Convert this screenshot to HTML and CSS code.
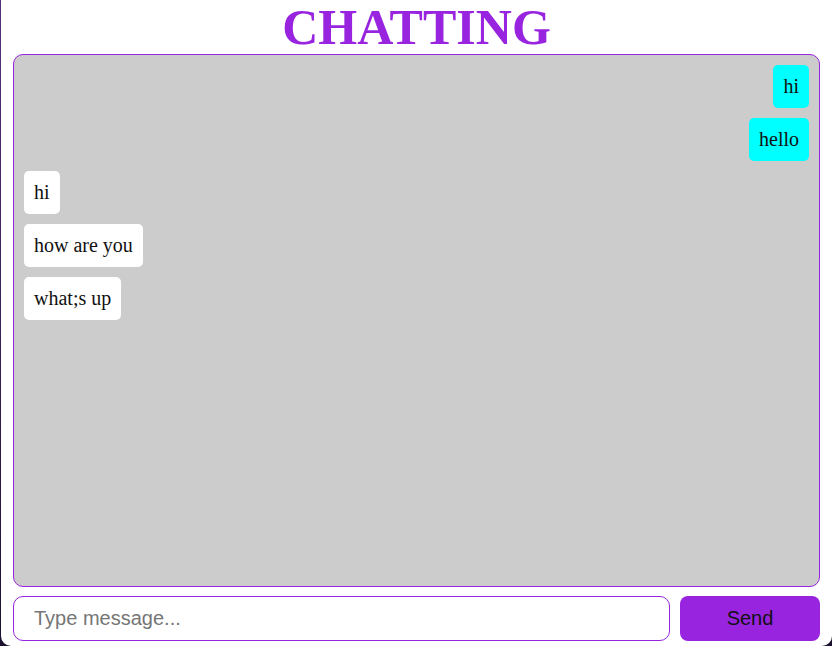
FILE: index.html
```html
<!DOCTYPE html>
<html>
<head>
<meta charset="utf-8">
<title>Chatting</title>
<link rel="stylesheet" href="styles.css">
</head>
<body>
<div class="app">
  <h1 class="title">CHATTING</h1>
  <div class="chat-box">
    <div class="msg sent">hi</div>
    <div class="msg sent">hello</div>
    <div class="msg received">hi</div>
    <div class="msg received">how are you</div>
    <div class="msg received">what;s up</div>
  </div>
  <div class="input-row">
    <input class="msg-input" type="text" placeholder="Type message...">
    <button class="send-btn">Send</button>
  </div>
</div>
</body>
</html>
```
FILE: styles.css
```css
html, body {
  margin: 0;
  padding: 0;
  height: 100%;
}
body {
  background: linear-gradient(to bottom, #55307a, #1c1230);
  font-family: "Liberation Serif", "Times New Roman", serif;
}
.app {
  box-sizing: border-box;
  margin-left: 1px;
  height: 646px;
  background: #fff;
  border-radius: 0 0 10px 10px;
  padding: 0 12px 5px 12px;
  display: flex;
  flex-direction: column;
}
.title {
  margin: 0;
  text-align: center;
  font-family: "Liberation Serif", "Times New Roman", serif;
  font-weight: bold;
  font-size: 50px;
  line-height: 54px;
  color: #9824e0;
}
.chat-box {
  flex: 1;
  background: #cccccc;
  border: 1px solid #9824e0;
  border-radius: 10px;
  padding: 10px;
  display: flex;
  flex-direction: column;
  align-items: flex-start;
  gap: 10px;
  overflow: auto;
}
.msg {
  font-size: 20px;
  line-height: 23px;
  padding: 10px;
  border-radius: 5px;
  color: #111;
}
.sent {
  align-self: flex-end;
  background: #00ffff;
}
.received {
  background: #ffffff;
}
.input-row {
  display: flex;
  gap: 10px;
  margin-top: 9px;
  height: 45px;
}
.msg-input {
  flex: 1;
  box-sizing: border-box;
  height: 45px;
  border: 1px solid #9824e0;
  border-radius: 10px;
  padding: 0 20px;
  font-family: "Liberation Sans", Arial, sans-serif;
  font-size: 20px;
  outline: none;
}
.msg-input::placeholder {
  color: #767676;
}
.send-btn {
  width: 140px;
  height: 45px;
  border: none;
  border-radius: 8px;
  background: #9824e0;
  color: #111;
  font-family: "Liberation Sans", Arial, sans-serif;
  font-size: 20px;
}
```
